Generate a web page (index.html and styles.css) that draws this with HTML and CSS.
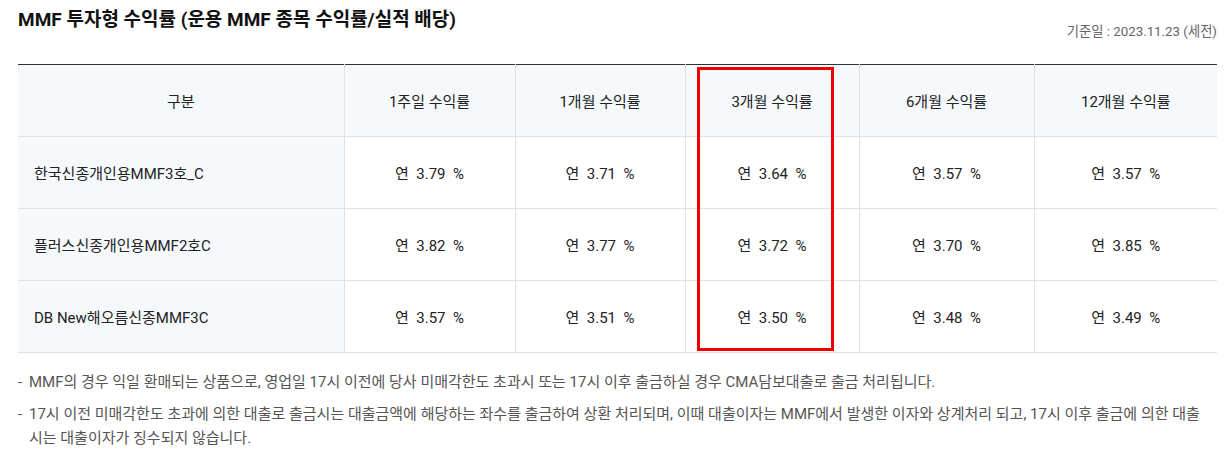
FILE: index.html
```html
<!DOCTYPE html>
<html lang="ko">
<head>
<meta charset="utf-8">
<link rel="stylesheet" href="styles.css">
</head>
<body>
<div class="page">
  <div class="head">
    <h2 class="title">MMF 투자형 수익률 (운용 MMF 종목 수익률/실적 배당)</h2>
    <p class="date">기준일 : 2023.11.23 (세전)</p>
  </div>
  <div class="table-wrap">
    <table class="rates">
      <colgroup>
        <col class="c0"><col class="c1"><col class="c2"><col class="c3"><col class="c4"><col class="c5">
      </colgroup>
      <thead>
        <tr>
          <th>구분</th>
          <th>1주일 수익률</th>
          <th>1개월 수익률</th>
          <th>3개월 수익률</th>
          <th>6개월 수익률</th>
          <th>12개월 수익률</th>
        </tr>
      </thead>
      <tbody>
        <tr>
          <th class="name">한국신종개인용MMF3호_C</th>
          <td>연&nbsp; 3.79&nbsp; %</td>
          <td>연&nbsp; 3.71&nbsp; %</td>
          <td>연&nbsp; 3.64&nbsp; %</td>
          <td>연&nbsp; 3.57&nbsp; %</td>
          <td>연&nbsp; 3.57&nbsp; %</td>
        </tr>
        <tr>
          <th class="name">플러스신종개인용MMF2호C</th>
          <td>연&nbsp; 3.82&nbsp; %</td>
          <td>연&nbsp; 3.77&nbsp; %</td>
          <td>연&nbsp; 3.72&nbsp; %</td>
          <td>연&nbsp; 3.70&nbsp; %</td>
          <td>연&nbsp; 3.85&nbsp; %</td>
        </tr>
        <tr>
          <th class="name">DB New해오름신종MMF3C</th>
          <td>연&nbsp; 3.57&nbsp; %</td>
          <td>연&nbsp; 3.51&nbsp; %</td>
          <td>연&nbsp; 3.50&nbsp; %</td>
          <td>연&nbsp; 3.48&nbsp; %</td>
          <td>연&nbsp; 3.49&nbsp; %</td>
        </tr>
      </tbody>
    </table>
    <div class="highlight"></div>
  </div>
  <ul class="notes">
    <li>MMF의 경우 익일 환매되는 상품으로, 영업일 17시 이전에 당사 미매각한도 초과시 또는 17시 이후 출금하실 경우 CMA담보대출로 출금 처리됩니다.</li>
    <li>17시 이전 미매각한도 초과에 의한 대출로 출금시는 대출금액에 해당하는 좌수를 출금하여 상환 처리되며, 이때 대출이자는 MMF에서 발생한 이자와 상계처리 되고, 17시 이후 출금에 의한 대출시는 대출이자가 징수되지 않습니다.</li>
  </ul>
</div>
</body>
</html>
```

FILE: styles.css
```css
* { box-sizing: border-box; }
html, body { margin: 0; padding: 0; background: #fff; }
body {
  font-family: Roboto, "Noto Sans CJK KR", sans-serif;
  color: #222;
}
.page {
  width: 1232px;
  padding: 0 15px 0 18px;
}
.head {
  height: 64px;
  display: flex;
  justify-content: space-between;
  align-items: flex-start;
}
.title {
  margin: 7px 0 0;
  font-size: 19px;
  line-height: 26px;
  font-weight: 700;
  color: #111;
}
.date {
  margin: 22px 0 0;
  font-size: 13.3px;
  line-height: 20px;
  color: #666;
}
.table-wrap {
  position: relative;
}
.rates {
  width: 1199px;
  border-collapse: collapse;
  table-layout: fixed;
  border-top: 1px solid #333;
}
.c0 { width: 326px; }
.c1 { width: 171px; }
.c2 { width: 170px; }
.c3 { width: 174px; }
.c4 { width: 175px; }
.c5 { width: 183px; }
.rates th, .rates td {
  height: 72px;
  padding: 0;
  font-size: 15px;
  font-weight: 400;
  color: #222;
  text-align: center;
  vertical-align: middle;
  border-bottom: 1px solid #dfe3e7;
  border-left: 1px solid #dfe3e7;
}
.rates thead th {
  height: 72px;
  background: #f5f9fc;
}
.rates tr > :first-child { border-left: none; }
.rates th.name {
  background: #f5f9fc;
  text-align: left;
  padding-left: 16px;
}
.highlight {
  position: absolute;
  left: 679px;
  top: 3px;
  width: 137px;
  height: 284px;
  border: 3px solid #f00000;
  pointer-events: none;
}
.notes {
  list-style: none;
  margin: 17px 0 0;
  padding: 0 9px 0 0;
  font-size: 15px;
  line-height: 24px;
  color: #555;
}
.notes li {
  position: relative;
  padding-left: 11px;
  margin-bottom: 8px;
}
.notes li::before {
  content: "-";
  position: absolute;
  left: 0;
  top: 0;
}
```
